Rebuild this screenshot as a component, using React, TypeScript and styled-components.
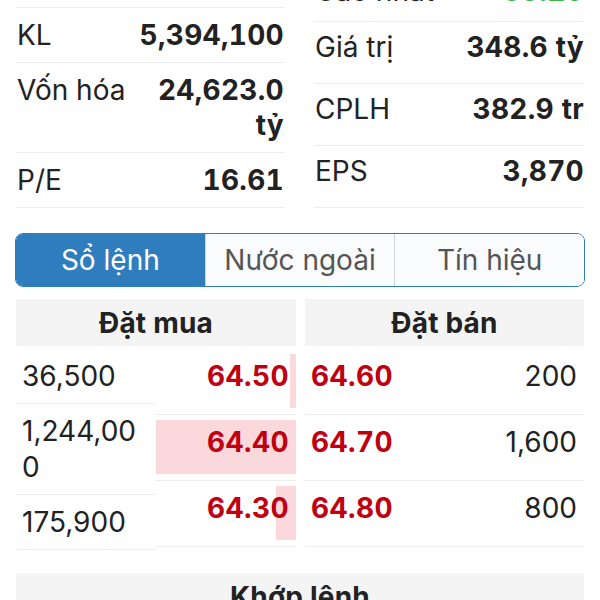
import React from 'react'
import styled, { createGlobalStyle } from 'styled-components'

const GlobalStyle = createGlobalStyle`
  body {
    margin: 0;
    background: #fff;
    font-family: Inter, 'Liberation Sans', sans-serif;
    color: #222;
  }
`

const Page = styled.div`
  width: 600px;
  height: 600px;
  overflow: hidden;
  padding: 0 16px;
  box-sizing: border-box;
`

const Stats = styled.div`
  display: grid;
  grid-template-columns: 268px 270px;
  column-gap: 30px;
  align-items: end;
  margin-top: -47px;
`

const StatColumn = styled.div`
  display: flex;
  flex-direction: column;
`

const StatRow = styled.div<{ $h: number; $top: number }>`
  display: flex;
  justify-content: space-between;
  align-items: flex-start;
  gap: 12px;
  height: ${p => p.$h}px;
  padding-top: ${p => p.$top}px;
  box-sizing: border-box;
  font-size: 28px;
  line-height: 35px;
  border-bottom: 1px solid #ececec;
`

const StatLabel = styled.span`
  flex-shrink: 0;
  padding-left: 1px;
`

const StatValue = styled.span<{ $color?: string }>`
  font-weight: 700;
  text-align: right;
  font-variant-numeric: tabular-nums;
  letter-spacing: 0.3px;
  color: ${p => p.$color ?? '#222'};
`

const Tabs = styled.div`
  display: flex;
  height: 54px;
  margin: 25px -1px 0;
  border: 1.5px solid #2f7dbd;
  border-radius: 8px;
  overflow: hidden;
  box-sizing: border-box;
`

const Tab = styled.div<{ $active?: boolean }>`
  flex: 1;
  display: flex;
  align-items: center;
  justify-content: center;
  font-size: 28px;
  background: ${p => (p.$active ? '#2f7dbd' : '#fafbfc')};
  color: ${p => (p.$active ? '#fff' : '#555')};

  & + & {
    border-left: 1px solid #cfd4db;
  }
`

const Book = styled.div`
  display: grid;
  grid-template-columns: 280px 279px;
  column-gap: 9px;
  margin-top: 12px;
`

const SectionHeader = styled.div`
  height: 47px;
  display: flex;
  align-items: center;
  justify-content: center;
  background: #f4f4f4;
  font-size: 28px;
  font-weight: 700;
  letter-spacing: 0.2px;
`

const SideBody = styled.div`
  margin-top: 3px;
`

const BuyBody = styled(SideBody)`
  display: grid;
  grid-template-columns: 139px 141px;
`

const CellColumn = styled.div`
  display: flex;
  flex-direction: column;
`

const VolumeCell = styled.div`
  padding: 9px 10px 9px 6px;
  font-size: 28px;
  line-height: 36px;
  word-break: break-all;
  border-bottom: 1px solid #ececec;
`

const PriceCell = styled.div<{ $split?: boolean }>`
  position: relative;
  height: 66px;
  display: flex;
  align-items: center;
  justify-content: ${p => (p.$split ? 'space-between' : 'flex-end')};
  padding: 0 7px 12px 6px;
  box-sizing: border-box;
  border-bottom: 1px solid #ececec;
  font-size: 28px;
`

const Price = styled.span`
  position: relative;
  color: #c00010;
  font-weight: 700;
  font-variant-numeric: tabular-nums;
  letter-spacing: 0.4px;
`

const DepthBar = styled.div`
  position: absolute;
  top: 5px;
  bottom: 6px;
  right: 0;
  background: #fbd8db;
`

const Volume = styled.span`
  color: #222;
`

const Matched = styled(SectionHeader)`
  margin-top: 23px;
`

const buys = [
  { vol: '36,500', price: '64.50', depth: 6 },
  { vol: '1,244,000', price: '64.40', depth: 140 },
  { vol: '175,900', price: '64.30', depth: 20 }
]

const sells = [
  { price: '64.60', vol: '200' },
  { price: '64.70', vol: '1,600' },
  { price: '64.80', vol: '800' }
]

export default function App () {
  return (
    <Page>
      <GlobalStyle />
      <Stats>
        <StatColumn>
          <StatRow $h={55} $top={10}>
            <StatLabel>Thấp nhất</StatLabel>
            <StatValue>64.30</StatValue>
          </StatRow>
          <StatRow $h={55} $top={10}>
            <StatLabel>KL</StatLabel>
            <StatValue>5,394,100</StatValue>
          </StatRow>
          <StatRow $h={90} $top={10}>
            <StatLabel>Vốn hóa</StatLabel>
            <StatValue>24,623.0 tỷ</StatValue>
          </StatRow>
          <StatRow $h={55} $top={10}>
            <StatLabel>P/E</StatLabel>
            <StatValue>16.61</StatValue>
          </StatRow>
        </StatColumn>
        <StatColumn>
          <StatRow $h={62} $top={14}>
            <StatLabel>Cao nhất</StatLabel>
            <StatValue $color="#3bb54a">65.20</StatValue>
          </StatRow>
          <StatRow $h={62} $top={8}>
            <StatLabel>Giá trị</StatLabel>
            <StatValue>348.6 tỷ</StatValue>
          </StatRow>
          <StatRow $h={62} $top={8}>
            <StatLabel>CPLH</StatLabel>
            <StatValue>382.9 tr</StatValue>
          </StatRow>
          <StatRow $h={62} $top={8}>
            <StatLabel>EPS</StatLabel>
            <StatValue>3,870</StatValue>
          </StatRow>
        </StatColumn>
      </Stats>

      <Tabs>
        <Tab $active>Sổ lệnh</Tab>
        <Tab>Nước ngoài</Tab>
        <Tab>Tín hiệu</Tab>
      </Tabs>

      <Book>
        <div>
          <SectionHeader>Đặt mua</SectionHeader>
          <BuyBody>
            <CellColumn>
              {buys.map(b => (
                <VolumeCell key={b.price}>{b.vol}</VolumeCell>
              ))}
            </CellColumn>
            <CellColumn>
              {buys.map(b => (
                <PriceCell key={b.price}>
                  <DepthBar style={{ width: b.depth }} />
                  <Price>{b.price}</Price>
                </PriceCell>
              ))}
            </CellColumn>
          </BuyBody>
        </div>
        <div>
          <SectionHeader>Đặt bán</SectionHeader>
          <SideBody>
            {sells.map(s => (
              <PriceCell key={s.price} $split>
                <Price>{s.price}</Price>
                <Volume>{s.vol}</Volume>
              </PriceCell>
            ))}
          </SideBody>
        </div>
      </Book>

      <Matched>Khớp lệnh</Matched>
    </Page>
  )
}
